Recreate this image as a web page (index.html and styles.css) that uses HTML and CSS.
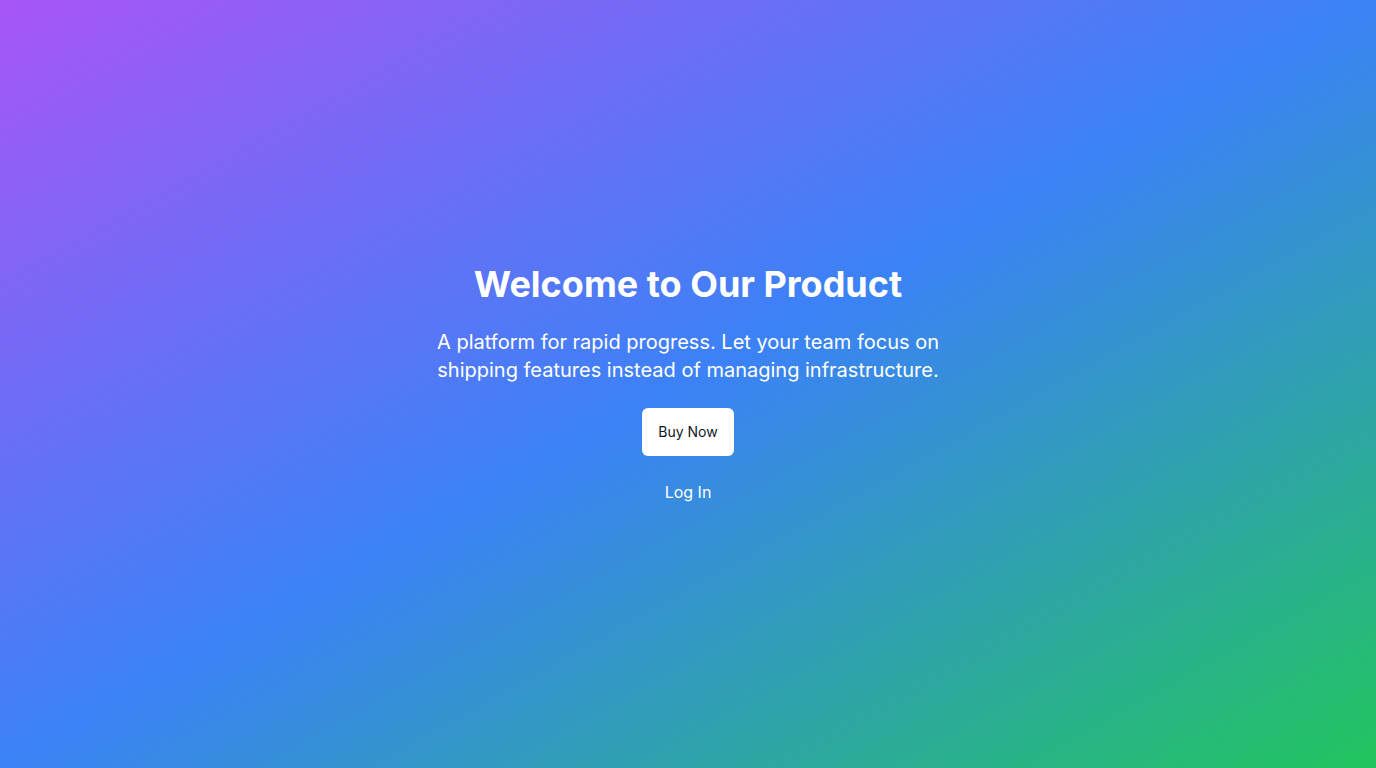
FILE: index.html
```html
<!DOCTYPE html>
<html lang="en">
<head>
<meta charset="utf-8">
<title>Welcome</title>
<link rel="stylesheet" href="styles.css">
</head>
<body>
<main class="hero">
  <div class="content">
    <h1 class="title">Welcome to Our Product</h1>
    <p class="lead">A platform for rapid progress. Let your team focus on shipping features instead of managing infrastructure.</p>
    <div class="actions">
      <a class="btn-primary" href="#">Buy Now</a>
      <a class="link" href="#">Log In</a>
    </div>
  </div>
</main>
</body>
</html>
```
FILE: styles.css
```css
* { box-sizing: border-box; }
html, body { margin: 0; padding: 0; height: 100%; }
body {
  font-family: Inter, "Noto Sans", sans-serif;
  color: #fff;
}
.hero {
  min-height: 100vh;
  display: flex;
  align-items: center;
  justify-content: center;
  background: linear-gradient(to bottom right, #a855f7 0%, #3b82f6 50%, #22c55e 100%);
}
.content {
  display: flex;
  flex-direction: column;
  align-items: center;
  text-align: center;
}
.title {
  margin: 0;
  font-size: 36px;
  line-height: 40px;
  font-weight: 700;
}
.lead {
  margin: 24px 0 0;
  max-width: 512px;
  font-size: 20px;
  line-height: 28px;
}
.actions {
  margin-top: 24px;
  display: flex;
  flex-direction: column;
  align-items: center;
  gap: 24px;
}
.btn-primary {
  display: inline-block;
  background: #fff;
  color: #111827;
  text-decoration: none;
  font-size: 14px;
  line-height: 24px;
  font-weight: 400;
  padding: 12px 16px;
  border-radius: 6px;
}
.link {
  color: #fff;
  text-decoration: none;
  font-size: 16px;
  line-height: 24px;
}
```
